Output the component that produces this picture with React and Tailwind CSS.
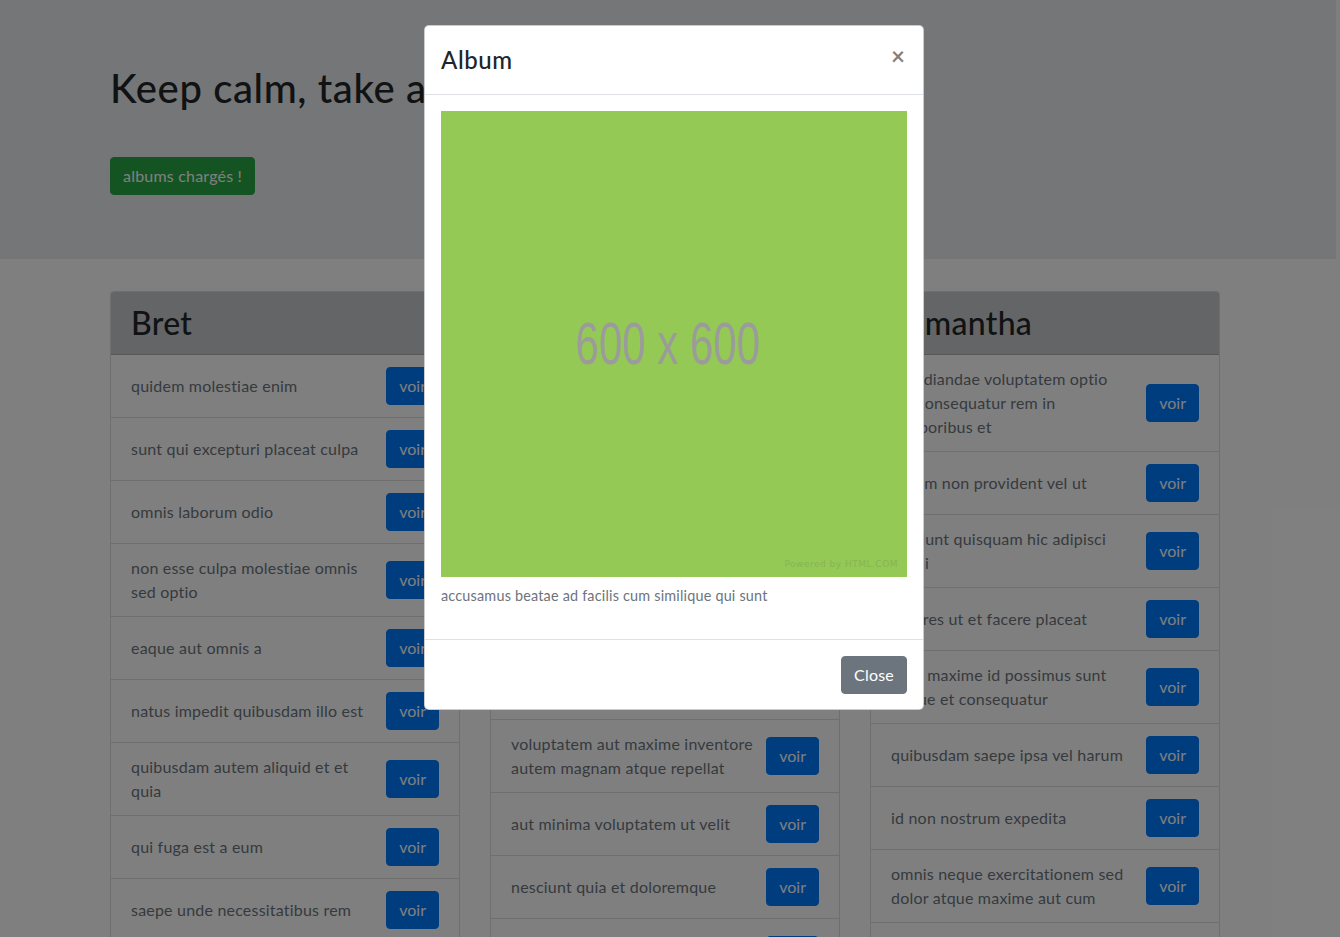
const albums = [
  {
    name: 'Bret',
    titles: [
      'quidem molestiae enim',
      'sunt qui excepturi placeat culpa',
      'omnis laborum odio',
      'non esse culpa molestiae omnis\nsed optio',
      'eaque aut omnis a',
      'natus impedit quibusdam illo est',
      'quibusdam autem aliquid et et\nquia',
      'qui fuga est a eum',
      'saepe unde necessitatibus rem',
      'distinctio laborum qui',
    ],
  },
  {
    name: 'Antonette',
    titles: [
      'quam nostrum impedit mollitia\nquod et dolor',
      'consequatur autem doloribus\nnatus consectetur',
      'ab rerum non rerum consequatur\nut ea unde',
      'ducimus molestias eos animi\natque nihil',
      'ut pariatur rerum ipsum natus\nrepellendus praesentium',
      'voluptatem aut maxime inventore\nautem magnam atque repellat',
      'aut minima voluptatem ut velit',
      'nesciunt quia et doloremque',
      'velit pariatur quaerat similique\nlibero omnis quia',
      'voluptas rerum iure ut enim',
    ],
  },
  {
    name: 'Samantha',
    titles: [
      'repudiandae voluptatem optio\nest consequatur rem in\ntemporibus et',
      'et rem non provident vel ut',
      'incidunt quisquam hic adipisci\nsequi',
      'dolores ut et facere placeat',
      'vero maxime id possimus sunt\nneque et consequatur',
      'quibusdam saepe ipsa vel harum',
      'id non nostrum expedita',
      'omnis neque exercitationem sed\ndolor atque maxime aut cum',
      'inventore ut quasi magnam itaque\nest fugit',
      'tempora assumenda et similique\nodit distinctio error',
    ],
  },
];

const AlbumCard = ({ user }) => (
  <div className="border border-black/[0.125] rounded-[4px] overflow-hidden bg-white">
    <div className="bg-[#c8cacc] px-5 py-3 border-b border-black/[0.125]">
      <h2 className="text-[32px] font-medium leading-[1.2] tracking-[0.3px] text-[#212529]">{user.name}</h2>
    </div>
    <ul>
      {user.titles.map((title) => (
        <li key={title} className="flex items-center justify-between gap-3 px-5 py-3 border-b border-black/[0.125]">
          <span className="text-[#6c757d] text-base leading-6 whitespace-pre">{title}</span>
          <button className="shrink-0 bg-[#007bff] border border-[#007bff] text-white px-3 py-1.5 rounded-[4px] text-base leading-6 tracking-normal">
            voir
          </button>
        </li>
      ))}
    </ul>
  </div>
);

const App = () => {
  return (
    <div className="relative h-[937px] overflow-hidden bg-white font-['Lato',sans-serif] tracking-[0.2px] text-[#212529]">
      {/* Jumbotron */}
      <div className="w-[1336px] bg-[#e9ecef] py-16 mb-8">
        <div className="w-[1110px] ml-[110px]">
          <h1 className="text-[40px] font-medium leading-[1.2] tracking-[0.6px] mb-2">Keep calm, take a look at the albums</h1>
          <button className="mt-[37px] bg-[#28a745] border border-[#28a745] text-white px-3 py-1.5 rounded-[4px] text-base leading-6">
            albums chargés !
          </button>
        </div>
      </div>

      <div className="w-[1110px] ml-[110px] grid grid-cols-3 gap-[30px] items-start">
        {albums.map((user) => (
          <AlbumCard key={user.name} user={user} />
        ))}
      </div>

      {/* backdrop */}
      <div className="absolute inset-0 bg-black/50"></div>

      {/* modal */}
      <div className="absolute left-[424px] top-[25px] w-[500px] bg-white border border-black/20 rounded-[5px]">
        <div className="flex items-center justify-between px-4 py-4 border-b border-[#dee2e6]">
          <h4 className="text-2xl font-medium leading-9 tracking-[0.6px] text-[#212529]">Album</h4>
          <button className="text-2xl font-bold leading-none text-black/50 -mt-2 mr-[2px]">×</button>
        </div>
        <div className="p-4">
          <figure className="mb-4">
            <div className="relative w-[466px] h-[466px] bg-[#93c954] flex items-center justify-center mb-2">
              <span className="font-['Liberation_Sans',Arial,sans-serif] tracking-normal text-[60px] text-[#9b9b9b] scale-x-70 -translate-x-[6px]">
                600 x 600
              </span>
              <span className="absolute right-[9px] bottom-[6px] font-['DejaVu_Sans',sans-serif] text-[9px] tracking-[0.5px] text-[#88b456]">
                Powered by HTML.COM
              </span>
            </div>
            <figcaption className="text-[14.4px] leading-[1.5] text-[#6c757d]">
              accusamus beatae ad facilis cum similique qui sunt
            </figcaption>
          </figure>
        </div>
        <div className="flex justify-end px-3 pt-3 pb-[11px] border-t border-[#dee2e6]">
          <button className="m-1 bg-[#6c757d] border border-[#6c757d] text-white px-3 py-1.5 rounded-[4px] text-base leading-6">
            Close
          </button>
        </div>
      </div>
    </div>
  );
};

export default App;
